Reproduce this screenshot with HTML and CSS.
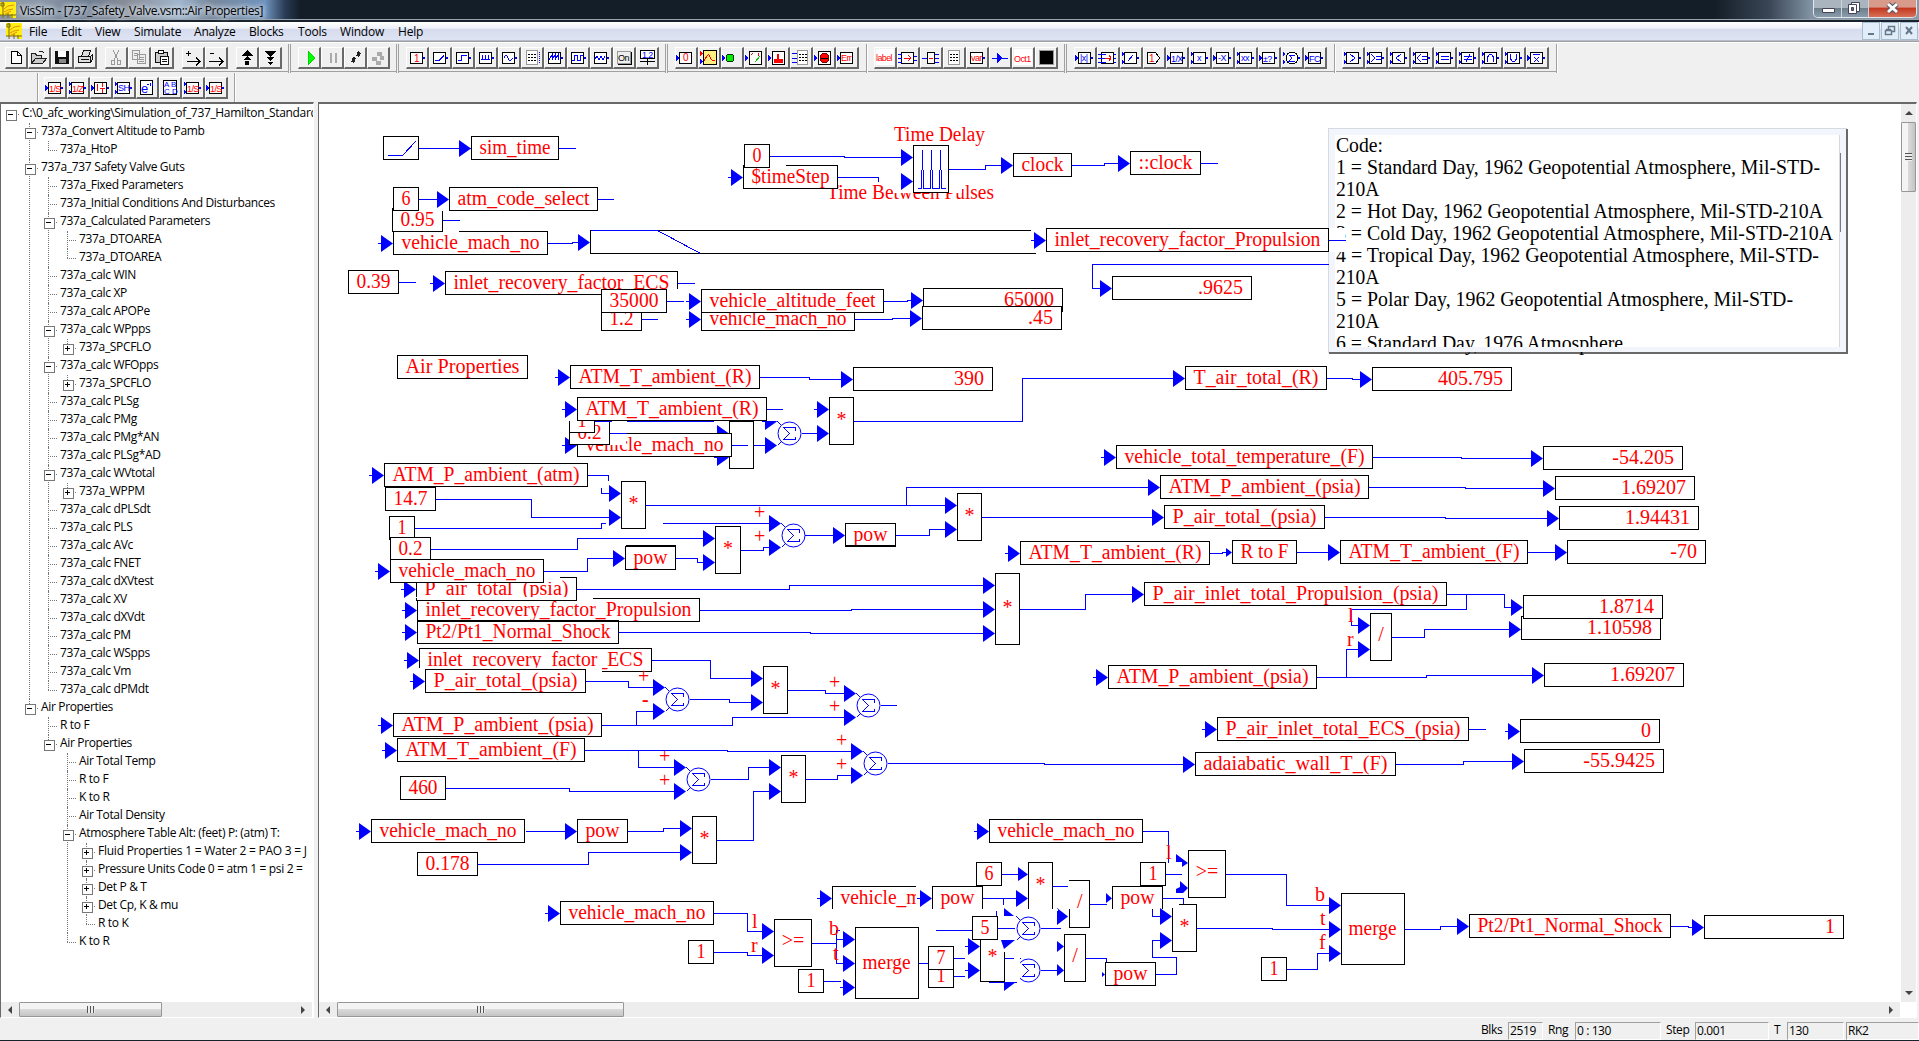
FILE: index.html
```html
<!DOCTYPE html>
<html lang="en">
<head>
<meta charset="utf-8">
<title>VisSim - [737_Safety_Valve.vsm::Air Properties]</title>
<link rel="stylesheet" href="styles.css">
</head>
<body>
<svg class="defs" width="0" height="0">
  <symbol id="logo" viewBox="0 0 16 16"><path d="M0 0h16v16h-5v-3H0z" fill="#ffee10"/><path d="M1 1h3v3H1zM0 13h16M3 0v16M8 11v5M12 12v4" fill="none" stroke="#7a6a10"/><path d="M4 7l4-3 6-1M4 10l4-2 5-1M5 12l6-3" fill="none" stroke="#e88a18"/></symbol>
  <symbol id="ic" viewBox="0 0 22 21"><path d="M4.500 5.500h12v11h-12z" fill="#fff" stroke="#000"/></symbol>
  <symbol id="out" viewBox="0 0 22 21"><path d="M17 10h2v2h-2z" fill="#00f" stroke="none"/></symbol>
  <symbol id="in1" viewBox="0 0 22 21"><path d="M1 8v6l3-3z" fill="#00f" stroke="none"/></symbol>
  <symbol id="in2" viewBox="0 0 22 21"><path d="M2 5v4l2-2zM2 13v4l2-2z" fill="#00f" stroke="none"/></symbol>
</svg>
<header class="title">
  <svg class="logo"><use href="#logo"/></svg><span class="title-text">VisSim - [737_Safety_Valve.vsm::Air Properties]</span>
  <div class="caption"><i class="min"><svg width="28" height="16"><path d="M8.500 8.500h12v4h-12z" fill="#fff" stroke="#445"/></svg></i><i class="max"><svg width="26" height="16"><path d="M9.500 2.500h8v9h-8z" fill="#fff" stroke="#445"/><path d="M6.500 4.500h8v9h-8z" fill="#fff" stroke="#445"/><path d="M9.500 7.500h2v3h-2z" fill="#667" stroke="#445"/></svg></i><i class="close"><svg width="46" height="16"><path d="M19 4l9 8M28 4l-9 8" stroke="#556" stroke-width="5"/><path d="M19 4l9 8M28 4l-9 8" stroke="#fff" stroke-width="3"/></svg></i></div>
</header>
<nav class="menu">
  <svg class="logo"><use href="#logo"/></svg>
  <span>File</span><span>Edit</span><span>View</span><span>Simulate</span><span>Analyze</span><span>Blocks</span><span>Tools</span><span>Window</span><span>Help</span>
  <div class="mdi"><i><svg width="16" height="16"><path d="M5 11h6" stroke="#667788" stroke-width="2"/></svg></i><i><svg width="16" height="16"><path d="M6.500 6V3.500h6v5H10M3.500 7.500h6v4h-6zM4 6.500h5" fill="none" stroke="#667788" stroke-width="1.500"/></svg></i><i><svg width="16" height="16"><path d="M5 4l6 7M11 4l-6 7" stroke="#667788" stroke-width="2"/></svg></i></div>
</nav>
<div class="bar bar1">
  <div class="grp g1">
    <b><svg><path d="M6.500 4.500h6l4 4v8h-10zM12.500 4.500v4h4" fill="#fff" stroke="#000"/></svg></b>
    <b><svg><path d="M3.500 16.500v-10h4l1 2h5v3M3.500 16.500l4-5h11l-4 5zM11 5q3-2 5 1" fill="#ccc" stroke="#222"/></svg></b>
    <b><svg><path d="M4 4h14v13H4z" fill="#111"/><path d="M7 4h8v6H7z" fill="#fff"/><path d="M8 12h7v4H8z" fill="#888"/></svg></b>
    <b><svg><path d="M7.500 9.500l2-6h7l-2 6M4.500 9.500h12v6h-12zM6.500 12.500h8M16.500 9.500l2-2v5l-2 3" fill="#ddd" stroke="#111"/></svg></b>
  </div>
  <div class="grp">
    <b><svg><path d="M8 3l5 10M14 3L9 13M6.500 13.500h3v4h-3zM12.500 13.500h3v4h-3z" fill="none" stroke="#999"/></svg></b>
    <b><svg><path d="M4.500 3.500h7v9h-7zM9.500 7.500h8v9h-8zM11 10h5M11 12h5M11 14h5M6 6h4M6 8h3" fill="#eee" stroke="#999"/></svg></b>
    <b><svg><path d="M4.500 5.500h12v10h-12z" fill="#ccc" stroke="#111"/><path d="M7.500 3.500h5v3h-5z" fill="#fff" stroke="#111"/><path d="M9.500 9.500h8v8h-8zM11 12h5M11 14h5" fill="#fff" stroke="#111"/></svg></b>
  </div>
  <div class="grp">
    <b><svg><path d="M4 6.500h5M6.500 4v5M5 14.500h13M14 11l4 3.500-4 3.500" fill="none" stroke="#000" stroke-width="1.500"/></svg></b>
    <b><svg><path d="M5 6.500h4M4 14.500h14M14 11l4 3.500-4 3.500" fill="none" stroke="#000" stroke-width="1.500"/></svg></b>
  </div>
  <div class="grp">
    <b><svg><path d="M11 3l6 6H5zM11 9l4 4H7zM9 14h4v4H9z" fill="#000"/></svg></b>
    <b><svg><path d="M5 4h13l-6.500 6zM8 10h7l-3.500 4zM9 15h5l-2.500 3z" fill="#000"/></svg></b>
  </div>
  <em class="dbl"></em>
  <div class="grp">
    <b><svg><path d="M10 4l7 7-7 7z" fill="#0f0" stroke="#0a0" stroke-width=".500"/></svg></b>
    <b><svg><path d="M9.500 6v10M14.500 6v10" stroke="#aaa" stroke-width="2"/></svg></b>
    <b><svg><path d="M7 15l2-5 3 1-2 5zM12 9l2-5 3 2-2 4z" fill="#222"/></svg></b>
    <b><svg><path d="M5 10h5v4H5zM10 5h5v4h-5zM9 14h5v4H9zM13 9h4v4h-4z" fill="#aaa"/></svg></b>
  </div>
  <em class="dbl"></em>
  <div class="grp">
    <b><svg><use href="#ic"/><use href="#out"/><text x="8" y="15" class="r">1</text></svg></b>
    <b><svg><use href="#ic"/><use href="#out"/><path d="M6 13.500h4l5-5"/></svg></b>
    <b><svg><use href="#ic"/><use href="#out"/><path d="M6 13.500h3.500v-5h5"/></svg></b>
    <b><svg><use href="#ic"/><use href="#out"/><path d="M6 12.500h9M7.500 8v4M10.500 8v4M13.500 8v4"/></svg></b>
    <b><svg><use href="#ic"/><use href="#out"/><path d="M6 11q2-5 4 0t5 0"/></svg></b>
    <b><svg><path d="M5.500 3.500h11v14h-11z" class="dot"/><path d="M7 7h8M7 10h8M7 13h8" class="dash"/><path d="M18 5v12" class="bdash"/></svg></b>
    <b><svg><use href="#ic"/><use href="#out"/><path d="M5 13l3-5v5l3-5v5l3-5v5"/></svg></b>
    <b><svg><use href="#ic"/><use href="#out"/><path d="M5 13.500h2.500v-5h3v5h3v-5h2"/></svg></b>
    <b><svg><use href="#ic"/><use href="#out"/><path d="M5 12l2-3 2 4 2-4 2 4 2-4"/></svg></b>
    <b><svg><path d="M4.500 4.500h13v12h-13z" fill="#eee" stroke="#999"/><text x="5" y="14" class="k">On</text><path d="M18 5v12H5" class="kk"/></svg></b>
    <b><svg><path d="M4.500 3.500h14v8h-14z" fill="#fff" stroke="#000"/><text x="6" y="11" class="s">1.2</text><path d="M4 14h15M11.500 12v6" class="kk"/></svg></b>
  </div>
  <em class="dbl"></em>
  <div class="grp">
    <b><svg><use href="#ic"/><use href="#in1"/><text x="8" y="14" class="r">0</text></svg></b>
    <b><svg><path d="M5.500 3.500h13v14h-13z" fill="#ffee80" stroke="#000"/><path d="M6 14l3-5q2-3 3 1t5 4" class="red"/><path d="M2 4v5l3-2z" fill="red"/><path d="M2 12v5l3-2z" fill="#00f"/></svg></b>
    <b><svg><use href="#in1"/><circle cx="9" cy="11" r="4" fill="#0e0" stroke="#030"/></svg></b>
    <b><svg><path d="M5.500 4.500h12v13h-12z" fill="#fff" stroke="#000"/><use href="#in1"/><path d="M7 8l2-2M14 6l1 3" class="red"/><path d="M11 15l5-6" stroke="#0c0"/></svg></b>
    <b><svg><path d="M5.500 4.500h12v13h-12z" fill="#fff" stroke="#000"/><use href="#in1"/><path d="M7 16v-4h3V7h2v5h4v4z" fill="red"/></svg></b>
    <b><svg><path d="M7.500 3.500h10v14h-10z" class="dot"/><path d="M9 7h8M9 10h8M9 13h8" class="dash"/><path d="M2 6h5M2 11h5M2 15h5"/></svg></b>
    <b><svg><path d="M5.500 4.500h12v13h-12z" fill="#fff" stroke="#000"/><use href="#in1"/><circle cx="11.500" cy="11" r="4.500" fill="red" stroke="#700"/><path d="M8 11h7" class="kk"/></svg></b>
    <b><svg><use href="#ic"/><use href="#in1"/><text x="5" y="14" class="r t">Err</text></svg></b>
  </div>
  <em></em>
  <div class="grp">
    <b><svg><path d="M2 2h18v16H2z" fill="#fff"/><text x="2" y="14" class="r t">label</text></svg></b>
    <b><svg><use href="#ic"/><path d="M1 7h4M1 11h4M1 15h4M17 9h3M17 13h3"/><path d="M7 11h6M11 8l3 3-3 3" class="red"/></svg></b>
    <b><svg><path d="M7.500 5.500h7v11h-7z" fill="#fff" stroke="#000"/><path d="M2 11h5M15 7h4M15 11h4M15 15h4"/><path d="M9 11h4" class="red"/></svg></b>
    <b><svg><path d="M5.500 3.500h11v14h-11z" class="dot"/><path d="M7 7h8M7 10h8M7 13h8" class="dash"/></svg></b>
    <b><svg><use href="#ic"/><use href="#out"/><text x="5" y="14" class="r t">var</text></svg></b>
    <b><svg><path d="M3 11h16"/><path d="M8 6v10l6-5z" fill="#00f"/></svg></b>
    <b><svg><path d="M2 2h18v16H2z" fill="#fff"/><text x="2" y="15" class="r t">Oct1</text></svg></b>
    <b><svg><path d="M4.500 3.500h14v14h-14z" fill="#000" stroke="#999"/></svg></b>
  </div>
  <em class="dbl"></em>
  <div class="grp">
    <b><svg><use href="#ic"/><use href="#in1"/><use href="#out"/><text x="6" y="14" class="s">|x|</text></svg></b>
    <b><svg><use href="#ic"/><path d="M1 7h8M1 11h8M1 15h8M17 7h2M17 11h2M17 15h2"/><path d="M8 11h6M12 8l2 3-2 3" class="red"/></svg></b>
    <b><svg><use href="#ic"/><use href="#in2"/><use href="#out"/><path d="M8 14l5-6"/></svg></b>
    <b><svg><path d="M4.500 5.500h8l4 5.500-4 5.500h-8z" fill="#fff" stroke="#000"/><text x="6" y="15" class="r">1</text></svg></b>
    <b><svg><use href="#ic"/><use href="#in1"/><use href="#out"/><text x="5" y="15" class="s">1/X</text></svg></b>
    <b><svg><use href="#ic"/><use href="#in2"/><use href="#out"/><text x="8" y="14" class="s">x</text></svg></b>
    <b><svg><use href="#ic"/><use href="#in1"/><use href="#out"/><text x="6" y="14" class="s">-X</text></svg></b>
    <b><svg><use href="#ic"/><use href="#in2"/><use href="#out"/><text x="6" y="14" class="s">xx</text></svg></b>
    <b><svg><use href="#ic"/><use href="#in1"/><use href="#out"/><text x="5" y="15" class="s">±?</text></svg></b>
    <b><svg><use href="#in2"/><use href="#out"/><circle cx="11" cy="11" r="6" fill="#fff" stroke="#000"/><path d="M14 8H8l3 3-3 3h6"/></svg></b>
    <b><svg><use href="#ic"/><use href="#in1"/><use href="#out"/><text x="5" y="15" class="s">FC</text></svg></b>
  </div>
  <em></em>
  <div class="grp">
    <b><svg><use href="#ic"/><use href="#in2"/><use href="#out"/><path d="M8 7l5 4-5 4"/></svg></b>
    <b><svg><use href="#ic"/><use href="#in2"/><use href="#out"/><path d="M6 7l4 4-4 4M11 9.500h5M11 12.500h5"/></svg></b>
    <b><svg><use href="#ic"/><use href="#in2"/><use href="#out"/><path d="M13 7l-5 4 5 4"/></svg></b>
    <b><svg><use href="#ic"/><use href="#in2"/><use href="#out"/><path d="M10 7l-4 4 4 4M11 9.500h5M11 12.500h5"/></svg></b>
    <b><svg><use href="#ic"/><use href="#in2"/><use href="#out"/><path d="M7 9.500h8M7 12.500h8"/></svg></b>
    <b><svg><use href="#ic"/><use href="#in2"/><use href="#out"/><path d="M7 9.500h8M7 12.500h8M13 7l-4 8"/></svg></b>
    <b><svg><use href="#ic"/><use href="#in2"/><use href="#out"/><path d="M7.500 15v-5q3-5 6 0v5"/></svg></b>
    <b><svg><use href="#ic"/><use href="#in2"/><use href="#out"/><path d="M7.500 7v5q3 5 6 0V7"/></svg></b>
    <b><svg><use href="#ic"/><use href="#in1"/><use href="#out"/><path d="M7 7.500h7M8 10l5 5M13 10l-5 5"/></svg></b>
  </div>
  <em class="end"></em>
</div>
<div class="bar bar2">
  <em></em>
  <div class="grp">
    <b><svg><use href="#ic"/><use href="#in1"/><use href="#out"/><text x="5" y="15" class="r t">1/S</text></svg></b>
    <b><svg><use href="#ic"/><use href="#in2"/><use href="#out"/><text x="5" y="15" class="r t">1/Z</text></svg></b>
    <b><svg><use href="#ic"/><use href="#in1"/><use href="#out"/><path d="M7.500 7v7M10 11h5M12.500 6v4M12.500 12v4" class="red"/></svg></b>
    <b><svg><use href="#ic"/><use href="#in2"/><use href="#out"/><text x="5" y="14" class="s">SH</text></svg></b>
    <b><svg><path d="M4.500 3.500h12v14h-12z" fill="#fff" stroke="#000"/><text x="5" y="16" class="s e">e</text><path d="M11 7.500h2M14 6v3M16 6v3"/></svg></b>
    <b><svg><path d="M4.500 3.500h13v14h-13z" fill="#fff" stroke="#000"/><text x="5" y="10" class="s q">A B</text><text x="5" y="17" class="s q">C D</text></svg></b>
    <b><svg><use href="#ic"/><use href="#in2"/><use href="#out"/><text x="5" y="15" class="r t">1/S</text></svg></b>
    <b><svg><use href="#ic"/><use href="#in1"/><use href="#out"/><text x="5" y="15" class="r t">1/S</text></svg></b>
  </div>
  <em></em>
</div>
<main class="work">
  <aside class="side">
    <ul class="tree root">
      <li><p class="m">C:\0_afc_working\Simulation_of_737_Hamilton_Standard</p>
      <ul>
        <li><p class="m">737a_Convert Altitude to Pamb</p><ul><li><p>737a_HtoP</p></li></ul></li>
        <li><p class="m">737a_737 Safety Valve Guts</p>
          <ul>
            <li><p>737a_Fixed Parameters</p></li>
            <li><p>737a_Initial Conditions And Disturbances</p></li>
            <li><p class="m">737a_Calculated Parameters</p><ul><li><p>737a_DTOAREA</p></li><li><p>737a_DTOAREA</p></li></ul></li>
            <li><p>737a_calc WIN</p></li>
            <li><p>737a_calc XP</p></li>
            <li><p>737a_calc APOPe</p></li>
            <li><p class="m">737a_calc WPpps</p><ul><li><p class="m p">737a_SPCFLO</p></li></ul></li>
            <li><p class="m">737a_calc WFOpps</p><ul><li><p class="m p">737a_SPCFLO</p></li></ul></li>
            <li><p>737a_calc PLSg</p></li>
            <li><p>737a_calc PMg</p></li>
            <li><p>737a_calc PMg*AN</p></li>
            <li><p>737a_calc PLSg*AD</p></li>
            <li><p class="m">737a_calc WVtotal</p><ul><li><p class="m p">737a_WPPM</p></li></ul></li>
            <li><p>737a_calc dPLSdt</p></li>
            <li><p>737a_calc PLS</p></li>
            <li><p>737a_calc AVc</p></li>
            <li><p>737a_calc FNET</p></li>
            <li><p>737a_calc dXVtest</p></li>
            <li><p>737a_calc XV</p></li>
            <li><p>737a_calc dXVdt</p></li>
            <li><p>737a_calc PM</p></li>
            <li><p>737a_calc WSpps</p></li>
            <li><p>737a_calc Vm</p></li>
            <li><p>737a_calc dPMdt</p></li>
          </ul></li>
        <li><p class="m">Air Properties</p>
          <ul>
            <li><p>R to F</p></li>
            <li><p class="m">Air Properties</p>
              <ul>
                <li><p>Air Total Temp</p></li>
                <li><p>R to F</p></li>
                <li><p>K to R</p></li>
                <li><p>Air Total Density</p></li>
                <li><p class="m">Atmosphere Table Alt: (feet) P: (atm) T:</p>
                  <ul>
                    <li><p class="m p wide">Fluid Properties 1 = Water 2 = PAO 3 = J</p></li>
                    <li><p class="m p">Pressure Units Code 0 = atm 1 = psi 2 =</p></li>
                    <li><p class="m p">Det P &amp; T</p></li>
                    <li><p class="m p">Det Cp, K &amp; mu</p></li>
                    <li><p>R to K</p></li>
                  </ul></li>
                <li><p>K to R</p></li>
              </ul></li>
          </ul></li>
      </ul></li>
    </ul>
    <div class="hs"><span class="ar l"></span><span class="thumb t1"><u></u></span><span class="ar r"></span></div>
  </aside>
  <section class="view">
    <div class="mid">
      <svg id="diagram" viewBox="319 104 1582 898" width="1582" height="898"></svg>
      <div class="vs"><span class="ar up"></span><span class="thumb tv"><u></u></span><span class="ar dn"></span></div>
    </div>
    <div class="hs"><span class="ar l"></span><span class="thumb t2"><u></u></span><span class="ar r"></span></div>
  </section>
</main>
<footer class="status"><span>Blks</span><q class="q1">2519</q><span class="s2">Rng</span><q class="q2">0 : 130</q><span class="s3">Step</span><q class="q3">0.001</q><span class="s4">T</span><q class="q4">130</q><q class="q5">RK2</q></footer>
<script src="diagram.js"></script>
</body>
</html>
```
FILE: styles.css
```css
*{box-sizing:border-box}
body{margin:0;width:1919px;height:1041px;overflow:hidden;background:#f0f0f0;display:flex;flex-direction:column;font:12px "Open Sans","Noto Sans",sans-serif;color:#000;border-bottom:1px solid #17222e}
i,em,b,u{font-style:normal;text-decoration:none;font-weight:normal}
p,ul{margin:0;padding:0;list-style:none}
.defs{position:absolute}
.logo{width:16px;height:16px;flex:none}
.title{height:22px;flex:none;display:flex;align-items:center;border-bottom:2px solid #17222e;box-shadow:inset 0 -1px #9aa3ac;
  background:linear-gradient(90deg,#8c96a0 0,#8b98a8 40px,#6d7c90 90px,#8a8f99 130px,#a0b6ce 180px,#77879b 210px,#6f93bd 265px,#2a3c55 285px,#141e28 300px,#141e28 1715px,#3a4756 1770px,#8294a5 1812px,#8a9aaa 1919px)}
.title-text{margin-left:4px;flex:1;letter-spacing:-.33px;text-shadow:0 0 5px #dfe6ee,0 0 5px #dfe6ee,0 0 8px #cdd6e0;white-space:nowrap}
.caption{display:flex;height:18px;align-self:flex-start;margin-right:2px;border:1px solid #dfe6ec;border-top:0;border-radius:0 0 5px 5px;overflow:hidden}
.caption i{border-right:1px solid #ccd4dc;height:17px;background:linear-gradient(#a9b4be 0 45%,#6e7e8c 50%,#8a9cac)}
.caption .close{border:0;background:linear-gradient(#d79a8b 0 40%,#c33a20 50%,#d8705a)}
.caption .min{width:28px}.caption .max{width:27px}.caption .close{width:47px}
.menu{height:19px;flex:none;display:flex;align-items:center;padding-left:6px;background:linear-gradient(#fff 0,#eef1f9 35%,#d6dcee 40%,#dfe4f4 100%);border-bottom:1px solid #b8bcc8;letter-spacing:-.2px}
.menu span{position:relative;white-space:nowrap;width:0;overflow:visible}
.menu span:nth-of-type(1){margin-left:7px;margin-right:32px}
.menu span:nth-of-type(2){margin-right:34px}
.menu span:nth-of-type(3){margin-right:39px}
.menu span:nth-of-type(4){margin-right:60px}
.menu span:nth-of-type(5){margin-right:55px}
.menu span:nth-of-type(6){margin-right:49px}
.menu span:nth-of-type(7){margin-right:42px}
.menu span:nth-of-type(8){margin-right:58px}
.mdi{display:flex;gap:1px;margin-left:auto;margin-right:1px}
.mdi i{width:18px;height:18px;border:1px solid #a9bdcf;background:#e1eefa}
.mdi svg{display:block}
.bar{display:flex;flex:none;align-items:flex-start}
.bar1{height:32px;padding-top:2px;border-top:1px solid #a0a0a0;box-shadow:inset 0 1px #fff;width:1919px;background:linear-gradient(#a0a0a0,#a0a0a0) 0 29px/1557px 1px no-repeat}
.bar1::before{content:"";width:5px;height:28px}
.bar1>.grp{margin-top:3px}
.grp{display:flex;flex:none}
.bar1 .grp+.grp{margin-left:8px}
.grp b{width:23px;height:22px;border:1px solid;border-color:#fff #696969 #696969 #fff;border-right-width:2px;border-bottom-width:2px;background:#f0f0f0;overflow:hidden}
.grp svg{display:block;width:22px;height:21px;margin:-1px 0 0 -1px;fill:none;stroke:#00f;shape-rendering:crispEdges}
.grp svg path[fill]:not([stroke]){stroke:none}
.grp text{font:9px "Liberation Sans",sans-serif;stroke:none;fill:#00f;letter-spacing:-.6px}
.grp .r{fill:red;font-size:10px}.grp .t{font-size:9px}.grp .k{fill:#000}.grp .kk{stroke:#000}.grp .red{stroke:red}
.grp .e{font-size:13px}.grp .q{font-size:8px;letter-spacing:0}
.grp .dot{fill:#fff;stroke:#999}.grp .dash{stroke:#000;stroke-dasharray:2 1}.grp .bdash{stroke:#00f;stroke-dasharray:1 1}
.bar em{width:1px;height:29px;background:#a0a0a0;margin:0 7px;box-shadow:1px 0 #fff}
.bar em.dbl{width:3px;margin:0 7px 0 6px;background:#f0f0f0;border:solid #a0a0a0;border-width:0 1px;box-shadow:none}
.bar em.end{margin-left:7px}
.bar2{height:29px;padding-left:30px}
.bar2>.grp{margin-top:4px}
.bar2 em{height:29px;margin-right:6px}
.bar2 .grp+em{margin-left:6px}
.work{display:flex;height:916px;flex:none;gap:4px;padding-right:3px}
.side{width:314px;border:1px solid #696969;border-top-width:2px;border-color:#696969 #fff #fff #696969;background:#fff;display:flex;flex-direction:column}
.view{flex:1;border:1px solid;border-top-width:2px;border-color:#696969 #fff #fff #696969;background:#fff;display:flex;flex-direction:column}
.tree{flex:1;padding-top:1px;overflow:hidden;white-space:nowrap}
.tree ul{padding-left:19px}
.tree li{position:relative}
.tree p{height:18px;line-height:16px;padding-left:21px;position:relative;letter-spacing:-.34px}
.tree li li::before{content:"";position:absolute;left:9px;top:0;bottom:0;border-left:1px dotted #777}
.tree li li:last-child::before{bottom:auto;height:9px}
.tree p::before{content:"";position:absolute;left:9px;top:9px;width:9px;border-top:1px dotted #777}
.tree p.m::after{content:"";position:absolute;left:5px;top:5px;width:9px;height:9px;border:1px solid #777;background:linear-gradient(#000,#000) 1px 3px/5px 1px no-repeat,#fff}
.tree p.p::after{background:linear-gradient(#000,#000) 1px 3px/5px 1px no-repeat,linear-gradient(#000,#000) 3px 1px/1px 5px no-repeat,#fff}
.tree p.wide{letter-spacing:-.24px}
.mid{display:flex;height:898px}
.mid svg{display:block}
.hs{height:15px;background:#ededed;display:flex;align-items:stretch;margin-right:1px;flex:none}
.view .hs{margin-right:16px}
.vs{width:15px;background:#ededed;display:flex;flex-direction:column;align-items:center}
.ar{width:18px;display:flex;align-items:center;justify-content:center}
.ar::before{content:"";border:4px solid transparent}
.ar.l::before{border-right-color:#444;border-left:0}.ar.r::before{border-left-color:#444;border-right:0}
.ar.up,.ar.dn{height:18px;width:15px}
.ar.up::before{border-bottom-color:#444;border-top:0}.ar.dn::before{border-top-color:#444;border-bottom:0}
.hs .ar.r{margin-left:auto}.vs .dn{margin-top:auto}
.thumb{border:1px solid #979797;border-radius:1px;background:linear-gradient(#f4f4f4 0 45%,#dadada 50%,#c4c4c4);display:flex;align-items:center;justify-content:center}
.thumb u{width:8px;height:7px;background:repeating-linear-gradient(90deg,#555 0 1px,#eee 1px 3px)}
.t1{width:143px}.t2{width:287px}
.tv{width:15px;height:70px;background:linear-gradient(90deg,#f4f4f4 0 45%,#dadada 50%,#c4c4c4)}
.tv u{width:7px;height:8px;background:repeating-linear-gradient(#555 0 1px,#eee 1px 3px)}
.status{height:22px;display:flex;align-items:flex-start;padding:4px 0 0 1481px;letter-spacing:-.4px;line-height:16px;white-space:nowrap;overflow:hidden}
.status q{quotes:none;height:18px;border:1px solid;border-color:#a0a0a0 #fff #fff #a0a0a0;padding-left:1px;flex:none}
.status span{flex:none;width:27px}
.status .q1{width:35px}.status .s2{margin-left:5px}.status .q2{width:86px}.status .s3{margin-left:5px;width:29px}.status .q3{width:74px}.status .s4{margin-left:5px;width:13px}.status .q4{width:57px;margin-right:2px}.status .q5{width:73px}
#diagram{background:#fff;font:20px "Liberation Serif",serif}
#diagram .wire{fill:none;stroke:#00f}
#diagram .tri{fill:#00f;stroke:none}
#diagram .box{fill:#fff;stroke:#000}
#diagram .lbl{fill:#f00}
#diagram .note{fill:#000}
#diagram .wipe{fill:#fff}
#diagram .edge{fill:none;stroke:#000}
#diagram .box,#diagram .wire,#diagram .edge{shape-rendering:crispEdges}
#diagram .round{fill:#fff;stroke:#00f}
#diagram .frame{fill:#f2f6fc;stroke:#d5dae0}
#diagram .shade{fill:none;stroke:#696969;stroke-width:2}
#diagram .bold{font-weight:bold;fill:#f00}
```
FILE: diagram.js
```js
const NS = 'http://www.w3.org/2000/svg';
const canvas = document.getElementById('diagram');

function add(tag, attrs, text) {
  const el = document.createElementNS(NS, tag);
  for (const k in attrs) el.setAttribute(k, attrs[k]);
  if (text) el.textContent = text;
  canvas.appendChild(el);
}
const wire = d => add('path', { class: 'wire', d, transform: 'translate(.5 .5)' });
const edge = d => add('path', { class: 'edge', d, transform: 'translate(.5 .5)' });
const wipe = (x, y, x2, y2) => add('rect', { class: 'wipe', x, y, width: x2 - x, height: y2 - y });
const poly = points => add('polygon', { class: 'tri', points });
const frame = (x, y, w, h) => add('rect', { class: 'box', x: x + .5, y: y + .5, width: w, height: h });

function text(s, x, y, len, cls) {
  const a = { class: cls || 'lbl', x, y };
  if (len) { a.textLength = len; a.lengthAdjust = 'spacingAndGlyphs'; }
  add('text', a, s);
}
// Input port: a short stub and a triangle whose tip touches the block.
function port(x, y) {
  wire(`M${x - 16} ${y}H${x - 10}`);
  poly(`${x - 12},${y - 8} ${x},${y + .5} ${x - 12},${y + 9}`);
}
// Named block; x and x2 are its left and right borders.
function block(s, x, y, x2) {
  frame(x, y, x2 - x, 23);
  text(s, x + 8.5, y + 18, x2 - x - 16);
}
// Display block with a right-aligned value.
function value(s, x, y, x2) {
  frame(x, y, x2 - x, 23);
  add('text', { class: 'lbl', x: x2 - 8, y: y + 18, 'text-anchor': 'end' }, s);
}
// Operator block with a symbol in the middle.
function op(s, x, y, x2, y2) {
  frame(x, y, x2 - x, y2 - y);
  add('text', { class: 'lbl', x: (x + x2) / 2 + .5, y: (y + y2) / 2 + (s === '*' ? 5 : 4), 'text-anchor': 'middle' }, s);
}
function sum(x, y) {
  add('circle', { class: 'round', cx: x + .5, cy: y + .5, r: 11.5 });
  wire(`M${x + 6} ${y - 3}V${y - 6}H${x - 6}L${x} ${y}L${x - 6} ${y + 6}H${x + 6}V${y + 3}`);
  wire(`M${x - 12} ${y - 12}L${x - 8} ${y - 8}M${x - 12} ${y + 12}L${x - 8} ${y + 8}`);
}

// Atmosphere code note
add('rect', { class: 'frame', x: 1328.5, y: 128.5, width: 518, height: 224 });
add('path', { class: 'shade', d: 'M1329 353H1847V129' });
wipe(1335, 135, 1839, 347);
add('path', { class: 'edge', d: 'M1840.5 153V232', 'stroke-opacity': .5 });
add('path', { class: 'edge', d: 'M1839.500 135V347', 'stroke-opacity': .12 });
[['Code:', 47], ['1 = Standard Day, 1962 Geopotential Atmosphere, Mil-STD-', 484], ['210A', 43.5],
 ['2 = Hot Day, 1962 Geopotential Atmosphere, Mil-STD-210A', 487],
 ['3 = Cold Day, 1962 Geopotential Atmosphere, Mil-STD-210A', 497],
 ['4 = Tropical Day, 1962 Geopotential Atmosphere, Mil-STD-', 483], ['210A', 43.5],
 ['5 = Polar Day, 1962 Geopotential Atmosphere, Mil-STD-', 457], ['210A', 43.5],
 ['6 = Standard Day, 1976 Atmosphere', 287]
].forEach(([s, w], i) => text(s, 1336, 152 + 22 * i, w, 'note'));
add('rect', { x: 1335, y: 347, width: 504, height: 5, fill: '#f2f6fc' });
wipe(1329, 228, 1345, 252);

// Clock
wire('M418 148H470M558 148H575');
frame(383, 136, 35, 23); wire('M387 155H402L415 141');
port(471, 148); block('sim_time', 471, 136, 558);
wire('M769 156H844V157H902M837 177H878V181M948 169H985V165H1002M1071 165H1104V163H1119M1200 163H1217');
text('Time Delay', 894, 141, 91);
text('Time Between Pulses', 827, 199, 167);
wipe(893, 170, 962, 193);
port(743, 177); block('$timeStep', 743, 165, 837); wipe(769, 164, 786, 166);
block('0', 744, 144, 769);
poly('901,149 913,157.500 901,166'); poly('901,173 913,181.500 901,190');
frame(913, 145, 35, 47);
wire('M917 188H921V169M922 149V169M923 169V188H930V169M931 149V169M932 169V188H939V169M940 149V169M941 169V188H945');
port(1013, 165); block('clock', 1013, 153, 1071);
port(1130, 163); block('::clock', 1130, 151, 1200);

// Flight conditions
wire('M418 199H437M597 199H613M442 220H459M547 243H572V242H579');
block('0.95', 392, 208, 442); wipe(418, 207, 444, 211);
block('6', 393, 187, 418);
port(449, 199); block('atm_code_select', 449, 187, 597);
port(393, 243); block('vehicle_mach_no', 393, 231, 547); wipe(443, 230, 459, 232);
port(590, 242);
edge('M1030 230H590V253H1035'); wire('M590 230H657L700 253');
wire('M1328 240H1345M1328 264H1092V288H1101');
port(1046, 240); block('inlet_recovery_factor_Propulsion', 1046, 228, 1328);
port(1112, 288); value('.9625', 1112, 276, 1251);
wire('M398 282H415M677 283H694M666 301H683M641 319H657');
block('0.39', 348, 270, 398);
port(445, 283); block('inlet_recovery_factor_ECS', 445, 271, 677); wipe(601, 289, 679, 296);
block('1.2', 601, 307, 641);
block('35000', 601, 289, 666);
wire('M883 301H907V300H912M854 319H892V318H911');
port(701, 319); block('vehicle_mach_no', 701, 307, 854);
port(701, 301); block('vehicle_altitude_feet', 701, 289, 883);
port(923, 300); value('65000', 923, 288, 1062);
wipe(1062, 312, 1064, 314);
port(922, 318); value('.45', 922, 306, 1061);

// Air temperature
block('Air Properties', 397, 355, 527);
wire('M759 377H809V379H842M853 421H1022V378H1174M1326 378H1352V379H1361');
port(570, 377); block('ATM_T_ambient_(R)', 570, 365, 759);
port(853, 379); value('390', 853, 367, 992);
port(1185, 378); block('T_air_total_(R)', 1185, 366, 1326);
port(1372, 379); value('405.795', 1372, 367, 1511);
port(777, 421); wipe(758, 410, 780, 421);
wire('M626 421H713M753 445H766M801 433H818');
port(729, 433); port(729, 457);
frame(729, 421, 24, 47);
port(577, 445); block('vehicle_mach_no', 577, 433, 731); wire('M731 445H747');
wipe(609, 432, 626, 445); wire('M609 433H626');
block('0.2', 569, 421, 609);
block('1', 569, 409, 594);
wipe(567, 405, 596, 421); wire('M594 421H611');
port(577, 409); block('ATM_T_ambient_(R)', 577, 397, 766); wire('M766 409H782');
port(777, 445); sum(789, 433);
port(829, 409); port(829, 433); op('*', 829, 397, 853, 444);

// Ambient and total pressure
wire('M587 475H608V480M601 487V493H610M435 499H531V517H610M645 505H946M906 505V487H1149');
port(384, 475); block('ATM_P_ambient_(atm)', 384, 463, 587);
block('14.7', 385, 487, 435);
poly('609,485 621,493.500 609,502'); poly('609,509 621,517.500 609,526'); op('*', 621, 481, 645, 528);
wire('M414 528H601V523H605M662 523H770M430 549H577V538H704M543 571H587V558H614M675 558H697V562H704M740 550H763V547H770M804 535H834M895 535H929V529H946M981 517H1153');
block('1', 389, 516, 414); block('0.2', 390, 537, 430);
wire('M576 589H789V585H984M699 610H851V609H984M618 632H810V633H984M1019 609H1085V594H1133');
port(416, 589); block('P_air_total_(psia)', 416, 577, 576); wipe(414, 576, 560, 582);
port(417, 610); block('inlet_recovery_factor_Propulsion', 417, 598, 699); wipe(416, 597, 593, 600); edge('M416 597V600H576V590');
port(417, 632); block('Pt2/Pt1_Normal_Shock', 417, 620, 618);
edge('M417 621H699');
port(390, 571); block('vehicle_mach_no', 390, 559, 543);
port(625, 558); block('pow', 625, 546, 675); edge('M625 545H675');
port(715, 538); port(715, 562); op('*', 715, 526, 740, 573);
port(781, 523); port(781, 547); sum(793, 535);
text('+', 754, 519); text('+', 754, 543);
port(845, 535); block('pow', 845, 523, 895); edge('M845 545H895');
port(957, 505); port(957, 529); op('*', 957, 493, 981, 540);
wire('M1372 457H1461V458H1532M1368 487H1465V488H1544M1324 517H1445V518H1548M1209 553H1222V552H1228M1296 552H1329M1527 552H1556');
port(1116, 457); block('vehicle_total_temperature_(F)', 1116, 445, 1372); port(1543, 458); value('-54.205', 1543, 446, 1682);
port(1160, 487); block('ATM_P_ambient_(psia)', 1160, 475, 1368); port(1555, 488); value('1.69207', 1555, 476, 1694);
port(1164, 517); block('P_air_total_(psia)', 1164, 505, 1324); port(1559, 518); value('1.94431', 1559, 506, 1698);
port(1020, 553); block('ATM_T_ambient_(R)', 1020, 541, 1209);
poly('1226,548 1232,552.500 1226,557'); block('R to F', 1232, 540, 1296);
port(1340, 552); block('ATM_T_ambient_(F)', 1340, 540, 1527);
port(1567, 552); value('-70', 1567, 540, 1705);

// Inlet pressure
port(995, 585); port(995, 609); port(995, 633); op('*', 995, 573, 1019, 644);
wire('M1446 594H1504V607H1512M1466 594V609H1351V625H1359M1316 677H1426V675H1532M1346 677V649H1359M1391 637H1424V629H1510');
port(1144, 594); block('P_air_inlet_total_Propulsion_(psia)', 1144, 582, 1446);
text('l', 1348, 622); text('r', 1347, 646);
poly('1358,617 1370,625.500 1358,634'); poly('1358,641 1370,649.500 1358,658'); op('/', 1370, 613, 1391, 660);
port(1521, 629); value('1.10598', 1521, 616, 1660);
port(1523, 607); value('1.8714', 1523, 595, 1662);
port(1108, 677); block('ATM_P_ambient_(psia)', 1108, 665, 1316);
port(1544, 675); value('1.69207', 1544, 663, 1683);

// ECS branch
wire('M651 660H710V678H752M787 690H825V693H845M880 705H896M585 681H628V687H654M689 699H729V702H752M601 725H732V717H845M636 725V711H654M584 750H727V751H852M638 750V767H675M710 779H748V767H770M805 779H837V775H852M887 763H1044V764H1184M445 788H569V791H675');
port(419, 660); block('inlet_recovery_factor_ECS', 419, 648, 651); wipe(418, 668, 602, 673); text('+', 638, 683);
port(425, 681); block('P_air_total_(psia)', 425, 669, 585);
port(665, 687); port(665, 711); sum(677, 699); text('-', 642, 706, 0, 'bold');
port(763, 678); port(763, 702); op('*', 763, 666, 787, 713);
port(856, 693); port(856, 717); sum(868, 705); text('+', 829, 689); text('+', 829, 713);
port(393, 725); block('ATM_P_ambient_(psia)', 393, 713, 601);
port(397, 750); block('ATM_T_ambient_(F)', 397, 738, 584);
block('460', 400, 776, 445);
port(686, 767); port(686, 791); sum(698, 779); text('+', 659, 763); text('+', 659, 787);
port(781, 767); port(781, 791); op('*', 781, 755, 805, 802);
port(863, 751); port(863, 775); sum(875, 763); text('+', 836, 747); text('+', 836, 771);
wire('M525 831H566M627 831H663V828H681M716 840H753V791H770M477 864H588V852H681M1468 729H1485M1395 764H1463V761H1513');
port(371, 831); block('vehicle_mach_no', 371, 819, 524);
port(577, 831); block('pow', 577, 819, 627);
block('0.178', 417, 852, 477);
port(692, 828); port(692, 852); op('*', 692, 816, 716, 863);
port(1217, 729); block('P_air_inlet_total_ECS_(psia)', 1217, 717, 1468);
port(1520, 731); value('0', 1520, 719, 1659);
port(1195, 764); block('adaiabatic_wall_T_(F)', 1195, 752, 1395);
port(1524, 761); value('-55.9425', 1524, 749, 1663);

// Normal shock, left part
wire('M713 913H747V931H763M713 952H747V955H763M811 943H836M839 930H836V963H844M836 939H844M823 981H840M918 963H928');
port(560, 913); block('vehicle_mach_no', 560, 901, 713);
block('1', 688, 940, 713); block('1', 798, 969, 823);
text('l', 752, 928); text('r', 751, 952);
poly('762,923 774,931.500 762,940'); poly('762,947 774,955.500 762,964'); op('>=', 774, 919, 811, 966);
text('b', 829, 935); text('t', 833, 960);
poly('843,931 855,939.500 843,948'); poly('843,955 855,963.500 843,972'); port(855, 987);
frame(855, 927, 63, 71); text('merge', 862.5, 969, 48);

// Normal shock, polynomial part
wire('M1142 831H1168V862M1165 874H1181M1001 874H1018M982 898H1017M1003 898V904M1052 886H1069M1089 904H1106M1162 898H1183V904');
wire('M935 930H972M997 928H1014M996 909V916M1040 928H1060M953 958H964M953 976H964M1004 958H1020M1040 970H1057M1085 958H1106V962M1152 909V916H1161M1161 940H1152V957H1176V974H1155M1196 928H1272V929H1330');
text('l', 1166, 859);
port(989, 831); block('vehicle_mach_no', 989, 819, 1142);
port(832, 898); frame(832, 886, 153, 23);
text('vehicle_mach_no', 840.5, 904, 137);
wipe(916, 885, 990, 912); wire('M916 898H922M982 898H990');
port(932, 898); block('pow', 932, 886, 982);
block('6', 976, 862, 1001);
poly('1018,867 1028,874.500 1018,881'); port(1028, 898);
op('*', 1028, 862, 1052, 909);
frame(1069, 880, 20, 47); text('/', 1077, 908); wipe(1068, 881, 1070, 909);
poly('1057,908 1068,916.500 1057,925');
poly('1106,893 1112,898.500 1106,903'); block('pow', 1112, 886, 1162);
wipe(830, 909, 1058, 911); wipe(1111, 909, 1152, 911); wipe(1153, 909, 1164, 911);
block('1', 1140, 862, 1165);
poly('1176,854 1188,863 1182,867 1182,862 1176,862'); poly('1180,881 1188,888 1183,893 1176,893 1176,889 1180,887');
op('>=', 1188, 850, 1225, 897);
port(1172, 940); poly('1160,908 1172,916.500 1160,925');
op('*', 1172, 904, 1196, 951); wipe(1171, 903, 1179, 908);
port(980, 946); port(980, 970);
op('*', 980, 934, 1004, 981); wipe(1003, 938, 1006, 952); wipe(998, 933, 1006, 938);
wipe(980, 933, 1006, 939);
block('5', 972, 916, 997); wire('M997 928H1014');
poly('1004,908 1014,916 1004,916'); sum(1028, 928);
poly('1001,940 1015,940 1004,949');
sum(1028, 970); wipe(1014, 956, 1020, 984);
poly('1004,982 1016,982 1004,991'); wire('M988 982H1016');
poly('1057,941 1064,946.500 1057,952'); poly('1057,964 1064,970.500 1057,976');
op('/', 1064, 934, 1085, 981);
block('1', 928, 964, 953); block('7', 928, 946, 953);
poly('1102,972 1105,974.500 1102,977'); block('pow', 1105, 962, 1155);

// Normal shock, output
wire('M1225 874H1286V905H1330M1286 969H1317V953H1330M1404 929H1440V926H1458M1670 926H1688V927H1693');
text('b', 1315, 901); text('t', 1320, 925); text('f', 1319, 949);
port(1341, 905); port(1341, 929); port(1341, 953);
frame(1341, 893, 63, 71); text('merge', 1348.5, 935, 48);
block('1', 1261, 957, 1286);
port(1469, 926); block('Pt2/Pt1_Normal_Shock', 1469, 914, 1670);
port(1704, 927); value('1', 1704, 915, 1843);
```
